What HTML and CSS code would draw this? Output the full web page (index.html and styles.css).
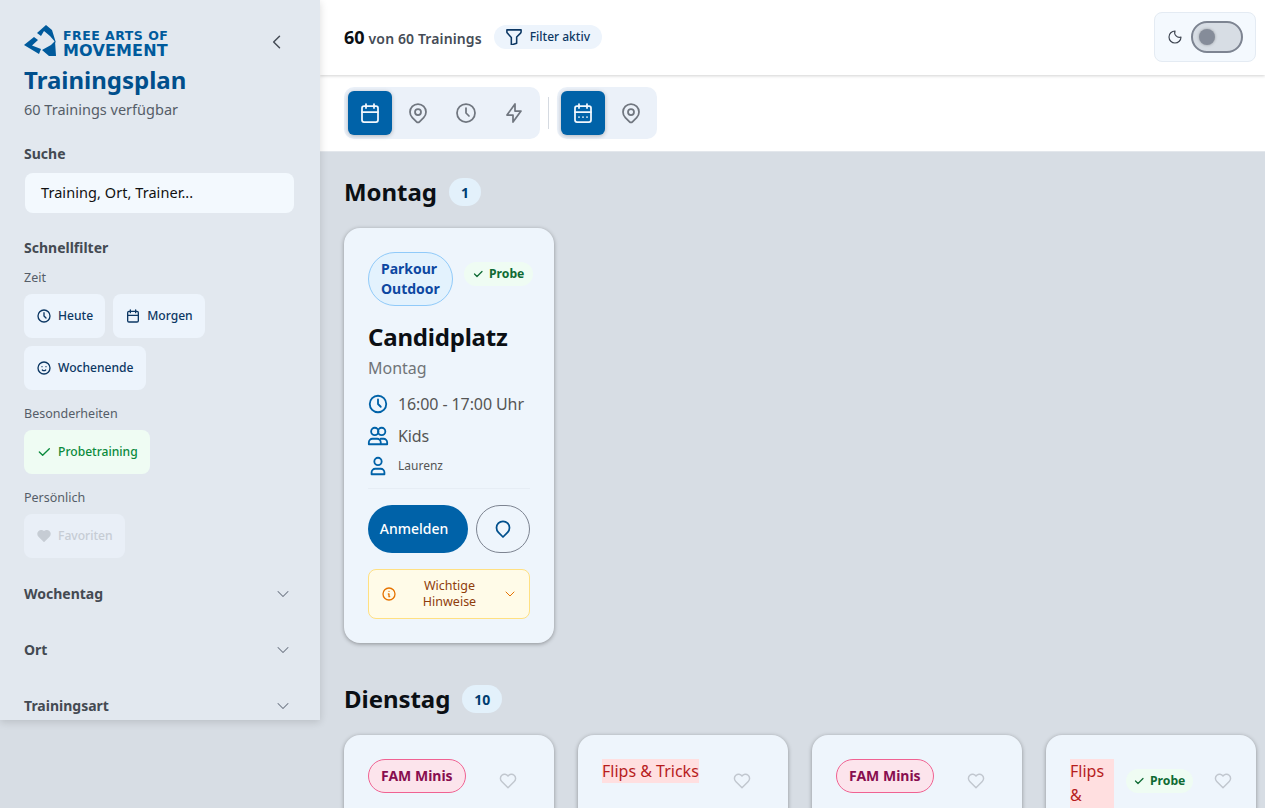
FILE: index.html
```html
<!DOCTYPE html>
<html lang="de">
<head>
<meta charset="utf-8">
<title>Trainingsplan</title>
<link rel="stylesheet" href="styles.css">
</head>
<body>
<svg class="defs" width="0" height="0">
  <symbol id="i-clock" viewBox="0 0 24 24"><circle cx="12" cy="12" r="9"/><path d="M12 7v5l3 3"/></symbol>
  <symbol id="i-cal" viewBox="0 0 24 24"><rect x="4" y="5" width="16" height="16" rx="2"/><path d="M16 3v4M8 3v4M4 11h16"/></symbol>
  <symbol id="i-cal2" viewBox="0 0 24 24"><rect x="4" y="5" width="16" height="16" rx="2"/><path d="M16 3v4M8 3v4M4 11h16M8 16h.01M12 16h.01M16 16h.01"/></symbol>
  <symbol id="i-smile" viewBox="0 0 24 24"><circle cx="12" cy="12" r="9"/><path d="M9 10h.01M15 10h.01M9.500 15a3.500 3.500 0 0 0 5 0"/></symbol>
  <symbol id="i-check" viewBox="0 0 24 24"><path d="M5 12l5 5L20 7"/></symbol>
  <symbol id="i-pin" viewBox="0 0 24 24"><circle cx="12" cy="11" r="3"/><path d="M17.660 16.660L13.410 20.900a2 2 0 0 1-2.830 0l-4.240-4.240a8 8 0 1 1 11.320 0z"/></symbol>
  <symbol id="i-bolt" viewBox="0 0 24 24"><path d="M13 3v7h6l-8 11v-7H5l8-11z"/></symbol>
  <symbol id="i-filter" viewBox="3 3 18 18"><path d="M4 4h16v2.200a2 2 0 0 1-.6 1.400L15 12v7l-6 2v-8.500L4.500 7.600A2 2 0 0 1 4 6.200V4z"/></symbol>
  <symbol id="i-chev" viewBox="0 0 24 24"><path d="M6 9l6 6 6-6"/></symbol>
  <symbol id="i-users" viewBox="0 0 24 24"><circle cx="8.500" cy="7" r="4"/><circle cx="16" cy="7" r="4"/><path d="M2 21v-2a4 4 0 0 1 4-4h5a4 4 0 0 1 4 4v2H2zM15 15h3a4 4 0 0 1 4 4v2h-7"/></symbol>
  <symbol id="i-user" viewBox="0 0 24 24"><circle cx="12" cy="7" r="4"/><path d="M5 21v-2a4 4 0 0 1 4-4h6a4 4 0 0 1 4 4v2H5z"/></symbol>
  <symbol id="i-heart" viewBox="0 0 24 24"><path d="M19.500 12.570L12 20l-7.500-7.430A5 5 0 1 1 12 6.040a5 5 0 1 1 7.500 6.530z"/></symbol>
  <symbol id="i-drop" viewBox="0 0 24 24"><path d="M12 20l-4.600-4.600a6.500 6.500 0 1 1 9.200 0z"/></symbol>
  <symbol id="i-info" viewBox="0 0 24 24"><circle cx="12" cy="12" r="9"/><path d="M12 8h.01M11 12h1v4h1"/></symbol>
</svg>

<aside class="sidebar">
  <div class="brand-row">
    <div class="logo">
      <svg class="logo-mark" viewBox="0 0 32 32" aria-hidden="true">
        <path d="M13 8L22 0L28 5L32 18L26 11L20 6L17 11z"/>
        <path d="M0 20L10 12L14 15L8 20.500L17 24L15 29z"/>
        <path d="M18 25L27 20L31 16L32 31L25 31z"/>
      </svg>
      <div class="logo-text"><span class="logo-l1">FREE ARTS OF</span><span class="logo-l2">MOVEMENT</span></div>
    </div>
    <svg class="collapse" viewBox="0 0 24 24"><path d="M15 5l-7 7 7 7"/></svg>
  </div>
  <h1 class="side-title">Trainingsplan</h1>
  <p class="side-sub">60 Trainings verfügbar</p>

  <h2 class="side-h search-h">Suche</h2>
  <div class="search">Training, Ort, Trainer...</div>

  <h2 class="side-h quick-h">Schnellfilter</h2>
  <div class="group-label">Zeit</div>
  <div class="chips">
    <button class="chip"><svg class="ic16"><use href="#i-clock"/></svg>Heute</button>
    <button class="chip"><svg class="ic16"><use href="#i-cal"/></svg>Morgen</button>
    <button class="chip"><svg class="ic16"><use href="#i-smile"/></svg>Wochenende</button>
  </div>
  <div class="group-label">Besonderheiten</div>
  <div class="chips">
    <button class="chip chip-green"><svg class="ic16"><use href="#i-check"/></svg>Probetraining</button>
  </div>
  <div class="group-label">Persönlich</div>
  <div class="chips">
    <button class="chip chip-off"><svg class="ic16 filled"><use href="#i-heart"/></svg>Favoriten</button>
  </div>

  <div class="acc first"><span>Wochentag</span><svg class="ic20"><use href="#i-chev"/></svg></div>
  <div class="acc"><span>Ort</span><svg class="ic20"><use href="#i-chev"/></svg></div>
  <div class="acc"><span>Trainingsart</span><svg class="ic20"><use href="#i-chev"/></svg></div>
</aside>

<main class="main">
  <header class="topbar">
    <div class="count"><strong>60</strong> <span>von 60 Trainings</span></div>
    <div class="filter-pill"><svg class="ic16"><use href="#i-filter"/></svg>Filter aktiv</div>
    <div class="theme">
      <svg class="moon" viewBox="0 0 24 24"><path d="M12 3a9 9 0 1 0 9 9 7 7 0 0 1-9-9z"/></svg>
      <span class="switch"><span class="knob"></span></span>
    </div>
  </header>

  <div class="toolbar">
    <div class="seg">
      <button class="seg-btn active"><svg class="ic24"><use href="#i-cal"/></svg></button>
      <button class="seg-btn"><svg class="ic24"><use href="#i-pin"/></svg></button>
      <button class="seg-btn"><svg class="ic24"><use href="#i-clock"/></svg></button>
      <button class="seg-btn"><svg class="ic24"><use href="#i-bolt"/></svg></button>
    </div>
    <span class="sep"></span>
    <div class="seg">
      <button class="seg-btn active"><svg class="ic24"><use href="#i-cal2"/></svg></button>
      <button class="seg-btn"><svg class="ic24"><use href="#i-pin"/></svg></button>
    </div>
  </div>

  <div class="content">
    <section class="day">
      <div class="day-head"><h2>Montag</h2><span class="badge">1</span></div>
      <div class="grid">
        <article class="card">
          <div class="card-top">
            <span class="tag tag-blue">Parkour Outdoor</span>
            <span class="probe"><svg class="ic12"><use href="#i-check"/></svg>Probe</span>
          </div>
          <h3 class="card-title">Candidplatz</h3>
          <div class="card-day">Montag</div>
          <div class="info"><svg class="ic22"><use href="#i-clock"/></svg>16:00 - 17:00 Uhr</div>
          <div class="info"><svg class="ic22"><use href="#i-users"/></svg>Kids</div>
          <div class="info small"><svg class="ic22"><use href="#i-user"/></svg>Laurenz</div>
          <div class="actions">
            <button class="btn-primary">Anmelden</button>
            <button class="btn-fav"><svg class="ic24"><use href="#i-drop"/></svg></button>
          </div>
          <div class="notice">
            <svg class="ic16"><use href="#i-info"/></svg>
            <span>Wichtige Hinweise</span>
            <svg class="ic16 thin"><use href="#i-chev"/></svg>
          </div>
        </article>
      </div>
    </section>

    <section class="day">
      <div class="day-head"><h2>Dienstag</h2><span class="badge">10</span></div>
      <div class="grid">
        <article class="card">
          <div class="card-top">
            <span class="tag tag-pink">FAM Minis</span>
            <span class="ghost-heart"><svg class="ic20"><use href="#i-heart"/></svg></span>
          </div>
        </article>
        <article class="card">
          <div class="card-top">
            <span class="tag-plain">Flips &amp; Tricks</span>
            <span class="ghost-heart"><svg class="ic20"><use href="#i-heart"/></svg></span>
          </div>
        </article>
        <article class="card">
          <div class="card-top">
            <span class="tag tag-pink">FAM Minis</span>
            <span class="ghost-heart"><svg class="ic20"><use href="#i-heart"/></svg></span>
          </div>
        </article>
        <article class="card">
          <div class="card-top">
            <span class="tag-plain narrow">Flips &amp; Tricks</span>
            <span class="probe tight"><svg class="ic12"><use href="#i-check"/></svg>Probe</span>
            <span class="ghost-heart"><svg class="ic20"><use href="#i-heart"/></svg></span>
          </div>
        </article>
      </div>
    </section>
  </div>
</main>
</body>
</html>
```

FILE: styles.css
```css
* { box-sizing: border-box; }
html, body { margin: 0; height: 808px; overflow: hidden; }
body {
  display: flex;
  align-items: flex-start;
  background: #d7dde4;
  font-family: "Noto Sans", sans-serif;
  color: #0b0f14;
}
.defs { position: absolute; }
svg { fill: none; stroke: currentColor; stroke-width: 2; stroke-linecap: round; stroke-linejoin: round; flex: none; }
button { font-family: inherit; border: 0; }
h1, h2, h3, p { margin: 0; }

.ic12 { width: 12px; height: 12px; stroke-width: 2.5; }
.ic16 { width: 16px; height: 16px; }
.ic20 { width: 20px; height: 20px; stroke-width: 1.75; }
.ic22 { width: 22px; height: 22px; margin: 0 -1px; }
.ic24 { width: 24px; height: 24px; stroke-width: 1.75; }
.thin { stroke-width: 1.5; }

/* Sidebar */
.sidebar {
  width: 320px;
  height: 720px;
  flex: none;
  overflow: hidden;
  padding: 25px 30px 0 24px;
  background: #e2e8ef;
  box-shadow: 0 2px 8px rgba(0, 0, 0, .14);
  position: relative;
  z-index: 2;
}
.brand-row { display: flex; align-items: center; justify-content: space-between; height: 32px; padding-right: 3px; }
.logo { display: flex; align-items: center; gap: 7px; }
.logo-mark { width: 32px; height: 32px; fill: #005a9c; stroke: none; }
.logo-text { display: flex; flex-direction: column; padding-top: 3px; color: #005a9c; font-family: "DejaVu Sans", sans-serif; font-weight: 700; }
.logo-l1 { font-size: 12.500px; line-height: 15px; letter-spacing: .5px; white-space: nowrap; }
.logo-l2 { font-size: 16px; line-height: 15px; letter-spacing: .15px; white-space: nowrap; }
.collapse { width: 20px; height: 20px; margin-top: 2px; color: #444b55; stroke-width: 1.75; }
.side-title { margin-top: 6px; font-size: 24px; line-height: 34px; font-weight: 700; color: #004f8c; }
.side-sub { margin-top: 2px; font-size: 14.500px; line-height: 20px; color: #555d68; }
.side-h { font-size: 14px; line-height: 20px; font-weight: 700; color: #444a52; }
.search-h { margin-top: 25px; }
.search {
  margin: 9px 0 0 1px;
  height: 40px;
  width: 269px;
  padding: 0 16px 2px;
  display: flex;
  align-items: center;
  background: #f3f9fe;
  border-radius: 8px;
  font-size: 14.500px;
  letter-spacing: .06px;
  color: #111;
}
.quick-h { margin-top: 25px; }
.group-label { margin-top: 11px; font-size: 12.500px; line-height: 18px; color: #555d68; }
.chips { display: flex; flex-wrap: wrap; gap: 8px; margin-top: 7px; margin-bottom: 8px; }
.chips + .group-label { margin-top: 15px; }
.chip {
  height: 44px;
  padding: 0 12px 2px;
  display: flex;
  align-items: center;
  gap: 6px;
  background: #edf4fc;
  border-radius: 8px;
  font-size: 12.100px;
  font-weight: 500;
  color: #0c3763;
}
.chip svg { margin-top: 2px; }
.chip-green { background: #effcf3; color: #0a8a3c; }
.chip-off { background: #e9eff7; color: #c6ccd4; }
.filled { fill: currentColor; }
.acc {
  display: flex;
  align-items: center;
  justify-content: space-between;
  height: 24px;
  margin-top: 32px;
  font-size: 14px;
  font-weight: 700;
  color: #444a52;
}
.acc svg { color: #6b7280; stroke-width: 1.25; margin: 2px -3px 0 0; }
.acc.first { margin-top: 23px; }

/* Main */
.main { flex: 1; min-width: 0; }
.topbar {
  height: 75px;
  display: flex;
  align-items: center;
  padding: 0 9px 0 24px;
  background: #fff;
  box-shadow: 0 1px 3px rgba(0, 0, 0, .18);
  position: relative;
  z-index: 1;
}
.count { display: flex; align-items: baseline; gap: 4px; margin-top: -2px; color: #454c56; font-size: 14px; letter-spacing: .12px; font-weight: 600; }
.count strong { font-size: 18px; letter-spacing: 0; font-weight: 700; color: #0b0f14; }
.filter-pill {
  margin-left: 12px;
  margin-top: -2px;
  height: 24px;
  padding: 0 12px;
  display: flex;
  align-items: center;
  gap: 8px;
  border-radius: 12px;
  background: #edf4fc;
  font-size: 12px;
  font-weight: 500;
  color: #0c3763;
}
.filter-pill svg { stroke-width: 1.75; }
.theme {
  margin-left: auto;
  margin-top: -2px;
  width: 102px;
  height: 50px;
  padding: 0 12px;
  display: flex;
  align-items: center;
  gap: 8px;
  background: #f4f9fe;
  border: 1px solid #e4ebf3;
  border-radius: 8px;
}
.moon { width: 16px; height: 16px; color: #3d4450; stroke-width: 1.75; }
.switch {
  width: 52px;
  height: 32px;
  padding: 0 6px;
  display: flex;
  align-items: center;
  background: #d7dde4;
  border: 2px solid #7d8491;
  border-radius: 16px;
}
.knob { width: 16px; height: 16px; border-radius: 50%; background: #858c99; box-shadow: 0 0 3px rgba(0,0,0,.3); }

.toolbar {
  height: 77px;
  display: flex;
  align-items: center;
  gap: 8px;
  padding: 0 24px;
  background: #fff;
  border-bottom: 1px solid #e3e7ec;
}
.seg { display: flex; padding: 4px; gap: 4px; background: #ebf1f9; border-radius: 10px; }
.seg-btn {
  width: 44px;
  height: 44px;
  padding: 0;
  display: flex;
  align-items: center;
  justify-content: center;
  background: transparent;
  border-radius: 6px;
  color: #70767f;
}
.seg-btn.active { background: #0062a8; color: #f2f8fd; box-shadow: 0 1px 4px rgba(0, 0, 0, .25); }
.sep { width: 1px; height: 32px; background: #d5dae1; }

.content { padding: 26px 9px 0 24px; }
.day + .day { margin-top: 42px; }
.day-head { display: flex; align-items: center; gap: 12px; height: 28px; }
.day-head h2 { font-size: 24px; line-height: 28px; font-weight: 700; letter-spacing: -.05px; color: #0b0f14; }
.badge {
  height: 28px;
  min-width: 32px;
  padding: 0 12px;
  display: flex;
  align-items: center;
  justify-content: center;
  background: #e3f1fb;
  border-radius: 14px;
  font-size: 14px;
  font-weight: 700;
  color: #003d70;
}
.grid { display: grid; grid-template-columns: repeat(4, 210px); gap: 24px; margin-top: 22px; }
.card {
  padding: 24px;
  min-height: 415px;
  background: #eef5fc;
  border-radius: 16px;
  box-shadow: 0 1px 4px rgba(0, 0, 0, .35);
}
.card-top { display: flex; align-items: flex-start; gap: 8px; }
.tag { flex: none; margin-right: 4px; border-radius: 27px; font-size: 14px; line-height: 20px; font-weight: 700; padding: 6px 12px; border: 1px solid; }
.tag-blue { width: 85px; margin-right: 3px; background: #e3f2fd; border-color: #90caf9; color: #0d47a1; }
.tag-pink { background: #fce4ec; border-color: #f06292; color: #880e4f; white-space: nowrap; }
.tag-plain { flex: none; margin-right: 4px; font-size: 16px; line-height: 24px; background: #ffdfe0; color: #b71c1c; white-space: nowrap; }
.tag-plain.narrow { width: 44px; white-space: normal; }
.probe {
  flex: none;
  display: flex;
  align-items: center;
  gap: 5px;
  height: 24px;
  margin-top: 10px;
  padding: 0 9px 2px 8px;
  background: #effcf3;
  border-radius: 12px;
  font-size: 12.200px;
  font-weight: 700;
  color: #0f6b34;
}
.probe svg { margin-top: 2px; }
.probe.tight { padding: 0 8px 2px 7px; }
.ghost-heart {
  flex: none;
  width: 44px;
  height: 44px;
  margin-left: auto;
  display: flex;
  align-items: center;
  justify-content: center;
  color: #c1c7cf;
}
.card-title { margin-top: 13px; font-size: 24px; line-height: 36px; font-weight: 700; letter-spacing: -.2px; color: #0b0f14; }
.card-day { margin-top: 1px; font-size: 16px; line-height: 24px; color: #707478; }
.info { display: flex; align-items: center; gap: 10px; margin-top: 8px; height: 24px; font-size: 16px; letter-spacing: -.1px; color: #555; }
.info svg { color: #0062a8; }
.card-day + .info { margin-top: 12px; }
.info.small { margin-top: 6px; padding-bottom: 2px; font-size: 12px; letter-spacing: 0; }
.info.small svg { margin-top: 2px; }
.actions { display: flex; gap: 8px; margin-top: 10px; padding-top: 16px; border-top: 1px solid #e6edf5; }
.btn-primary {
  width: 100px;
  height: 48px;
  padding: 0 8px 2px 0;
  background: #0062a8;
  border-radius: 24px;
  font-size: 14px;
  font-weight: 500;
  color: #fff;
}
.btn-fav {
  width: 54px;
  height: 48px;
  padding: 0;
  display: flex;
  align-items: center;
  justify-content: center;
  background: transparent;
  border: 1px solid #7d8491;
  border-radius: 24px;
  color: #004f8c;
}
.notice {
  margin-top: 16px;
  height: 50px;
  padding: 0 11px 0 12px;
  display: flex;
  align-items: center;
  justify-content: space-between;
  background: #fffbe8;
  border: 1px solid #ffe082;
  border-radius: 8px;
  color: #e67300;
}
.notice span { width: 86px; text-align: center; font-size: 12.500px; line-height: 16px; color: #8f3d0c; }
```
